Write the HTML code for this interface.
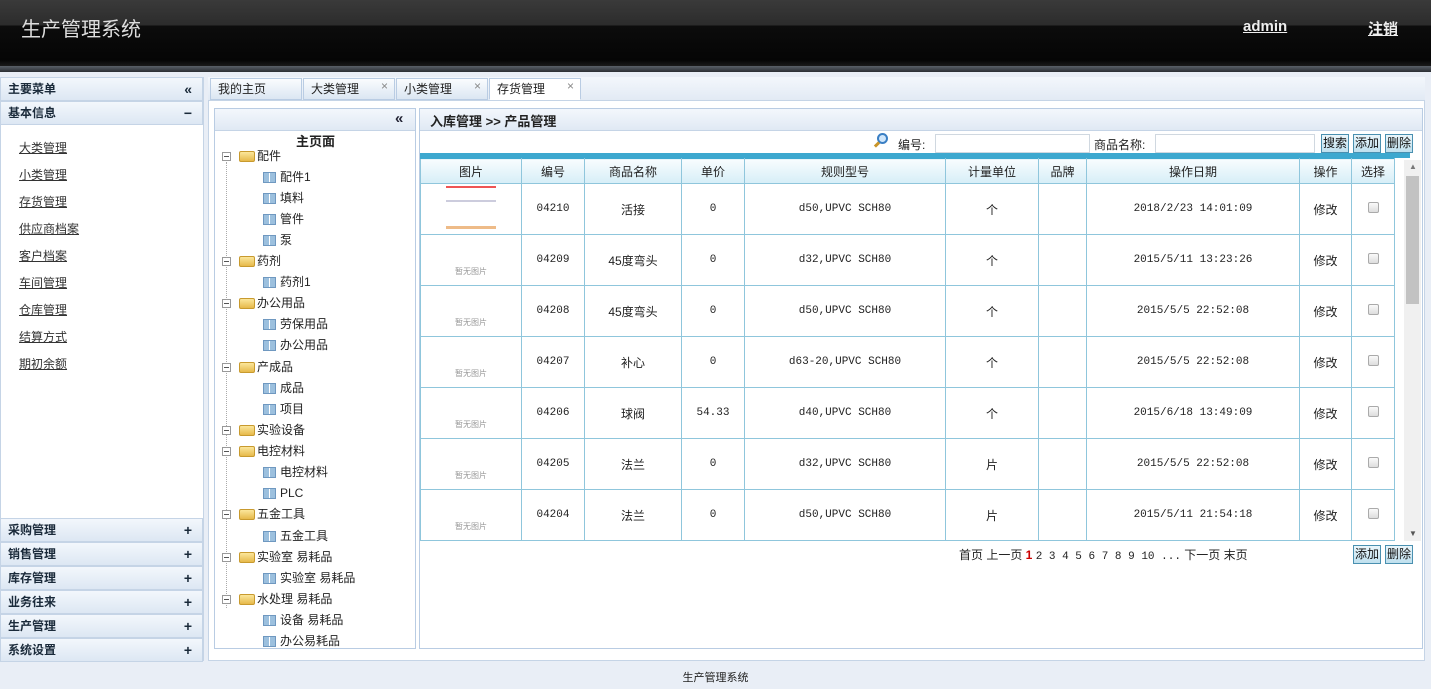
<!DOCTYPE html>
<html><head><meta charset="utf-8">
<style>
*{margin:0;padding:0;box-sizing:border-box}
body{width:1431px;height:689px;overflow:hidden;background:#e9eef6;font-family:"Liberation Sans","Noto Sans CJK SC",sans-serif;font-size:12px;color:#222;position:relative}
.a{position:absolute}
#hd{left:0;top:0;width:1431px;height:68px;background:linear-gradient(#3a3a3a 0,#2c2c2c 25px,#0c0c0c 26px,#050505 60px,#1a1a1a 66px)}
#hd2{left:0;top:66px;width:1431px;height:6px;background:linear-gradient(#5a6068,#2a2e33)}
.ttl{left:21px;top:13px;color:#ddd;font-size:20px}
.hl{color:#eee;font-size:15px;font-weight:bold;text-decoration:underline;top:18px}
.ph{background:linear-gradient(#f3f7fc,#dde7f3);border:1px solid #c5d4e6;font-weight:bold;color:#1a2a3a;padding-left:7px;line-height:22px;height:24px;width:203px;left:0}
.ph span{position:absolute;right:10px;top:0;font-size:14px}
.lk{left:19px;color:#333;text-decoration:underline;font-size:12px}
.tab{top:78px;height:22px;border:1px solid #b9cce3;background:linear-gradient(#fafcfe,#dbe6f2);line-height:20px;padding-left:7px;color:#222}
.tab i{position:absolute;right:6px;top:-3px;font-style:normal;color:#888;font-size:12px}
.tr{left:222px;height:21px;line-height:21px;font-size:12px}
.bx{display:inline-block;width:9px;height:9px;border:1px solid #999;vertical-align:middle;position:relative;margin-right:8px;background:#fff}
.bx:after{content:"";position:absolute;left:1px;top:3px;width:5px;height:1px;background:#555}
.fd{display:inline-block;width:16px;height:11px;background:linear-gradient(#fbe79b,#e6b94b);border:1px solid #c89a2e;border-radius:2px;vertical-align:middle;margin-right:2px}
.lf{display:inline-block;width:13px;height:11px;background:#9cc0de;border:1px solid #6f98c0;vertical-align:middle;margin:0 4px 0 41px;background-image:linear-gradient(90deg,transparent 5px,#fff 5px,#fff 6px,transparent 6px)}
table{border-collapse:collapse;position:absolute;left:420px;top:158px;table-layout:fixed}
td,th{border:1px solid #8fc6dc;text-align:center;font-weight:normal;font-size:12px}
th{height:25px;background:linear-gradient(#f8fcfe,#d6eef7);border-top:5px solid #3da8cf}
td{height:51px;background:#fff}
td.m{font-family:"Liberation Mono","Noto Sans CJK SC",monospace;font-size:11px}
.cb{display:inline-block;width:11px;height:11px;border:1px solid #aaa;border-radius:2px;background:linear-gradient(#fafafa,#ddd)}
.np{font-size:8px;color:#999;display:block;margin-top:22px}
.btn{top:134px;height:19px;border:1px solid #4a90b0;background:linear-gradient(#eaf6fb,#bfe0ee);font-size:12px;line-height:17px;padding:0 1px;color:#111}
.inp{top:134px;height:19px;border:1px solid #d0d8e0;background:#fff}
</style></head><body>
<div id="hd" class="a"></div><div id="hd2" class="a"></div>
<div class="a ttl">生产管理系统</div>
<div class="a hl" style="left:1243px">admin</div>
<div class="a hl" style="left:1368px">注销</div>

<div class="a" style="left:0;top:77px;width:204px;height:584px;background:#fff;border:1px solid #c5d4e6"></div>
<div class="a ph" style="top:77px">主要菜单<span>«</span></div>
<div class="a ph" style="top:101px">基本信息<span>−</span></div>
<div class="a lk" style="top:139px">大类管理</div>
<div class="a lk" style="top:166px">小类管理</div>
<div class="a lk" style="top:193px">存货管理</div>
<div class="a lk" style="top:220px">供应商档案</div>
<div class="a lk" style="top:247px">客户档案</div>
<div class="a lk" style="top:274px">车间管理</div>
<div class="a lk" style="top:301px">仓库管理</div>
<div class="a lk" style="top:328px">结算方式</div>
<div class="a lk" style="top:355px">期初余额</div>
<div class="a ph" style="top:518px">采购管理<span>+</span></div>
<div class="a ph" style="top:542px">销售管理<span>+</span></div>
<div class="a ph" style="top:566px">库存管理<span>+</span></div>
<div class="a ph" style="top:590px">业务往来<span>+</span></div>
<div class="a ph" style="top:614px">生产管理<span>+</span></div>
<div class="a ph" style="top:638px">系统设置<span>+</span></div>

<div class="a" style="left:208px;top:77px;width:1217px;height:584px;background:#fff;border:1px solid #c5d4e6"></div>
<div class="a" style="left:208px;top:77px;width:1217px;height:24px;background:linear-gradient(#f3f7fc,#e2eaf4);border-bottom:1px solid #c5d4e6"></div>
<div class="a tab" style="left:210px;width:92px">我的主页</div>
<div class="a tab" style="left:303px;width:92px">大类管理<i>×</i></div>
<div class="a tab" style="left:396px;width:92px">小类管理<i>×</i></div>
<div class="a tab" style="left:489px;width:92px;background:#fff;border-bottom-color:#fff">存货管理<i>×</i></div>

<div class="a" style="left:214px;top:108px;width:202px;height:541px;border:1px solid #b9cce3;background:#fff"></div>
<div class="a" style="left:215px;top:109px;width:200px;height:22px;background:linear-gradient(#f3f7fc,#e0e9f4);border-bottom:1px solid #c5d4e6"></div>
<div class="a" style="left:395px;top:110px;font-weight:bold;font-size:15px;color:#223">«</div>
<div class="a" style="left:296px;top:131px;font-weight:bold;font-size:13px">主页面</div>
<div class="a" style="left:226px;top:162px;width:1px;height:446px;border-left:1px dotted #aaa"></div>
<div class="a tr" style="top:146px"><span class="bx"></span><span class="fd"></span>配件</div>
<div class="a tr" style="top:167px"><span class="lf"></span>配件1</div>
<div class="a tr" style="top:188px"><span class="lf"></span>填料</div>
<div class="a tr" style="top:209px"><span class="lf"></span>管件</div>
<div class="a tr" style="top:230px"><span class="lf"></span>泵</div>
<div class="a tr" style="top:251px"><span class="bx"></span><span class="fd"></span>药剂</div>
<div class="a tr" style="top:272px"><span class="lf"></span>药剂1</div>
<div class="a tr" style="top:293px"><span class="bx"></span><span class="fd"></span>办公用品</div>
<div class="a tr" style="top:314px"><span class="lf"></span>劳保用品</div>
<div class="a tr" style="top:335px"><span class="lf"></span>办公用品</div>
<div class="a tr" style="top:357px"><span class="bx"></span><span class="fd"></span>产成品</div>
<div class="a tr" style="top:378px"><span class="lf"></span>成品</div>
<div class="a tr" style="top:399px"><span class="lf"></span>项目</div>
<div class="a tr" style="top:420px"><span class="bx"></span><span class="fd"></span>实验设备</div>
<div class="a tr" style="top:441px"><span class="bx"></span><span class="fd"></span>电控材料</div>
<div class="a tr" style="top:462px"><span class="lf"></span>电控材料</div>
<div class="a tr" style="top:483px"><span class="lf"></span>PLC</div>
<div class="a tr" style="top:504px"><span class="bx"></span><span class="fd"></span>五金工具</div>
<div class="a tr" style="top:526px"><span class="lf"></span>五金工具</div>
<div class="a tr" style="top:547px"><span class="bx"></span><span class="fd"></span>实验室 易耗品</div>
<div class="a tr" style="top:568px"><span class="lf"></span>实验室 易耗品</div>
<div class="a tr" style="top:589px"><span class="bx"></span><span class="fd"></span>水处理 易耗品</div>
<div class="a tr" style="top:610px"><span class="lf"></span>设备 易耗品</div>
<div class="a" style="left:215px;top:631px;width:200px;height:17px;overflow:hidden"><div class="tr" style="position:absolute;left:7px;top:0"><span class="lf"></span>办公易耗品</div></div>

<div class="a" style="left:419px;top:108px;width:1004px;height:541px;border:1px solid #b9cce3;background:#fff"></div>
<div class="a" style="left:420px;top:109px;width:1002px;height:22px;background:linear-gradient(#f3f7fc,#e0e9f4);border-bottom:1px solid #c5d4e6"></div>
<div class="a" style="left:430px;top:111px;font-weight:bold;font-size:13px">入库管理 &gt;&gt; 产品管理</div>
<div class="a" style="left:877px;top:133px;width:11px;height:11px;border:2px solid #3a7fc4;border-radius:50%;background:#cfe6fb"></div>
<div class="a" style="left:874px;top:143px;width:6px;height:3px;background:#c9952a;transform:rotate(-45deg)"></div>
<div class="a" style="left:898px;top:136px">编号:</div>
<div class="a inp" style="left:935px;width:155px"></div>
<div class="a" style="left:1094px;top:136px">商品名称:</div>
<div class="a inp" style="left:1155px;width:160px"></div>
<div class="a btn" style="left:1321px">搜索</div>
<div class="a btn" style="left:1353px">添加</div>
<div class="a btn" style="left:1385px">删除</div>
<div class="a" style="left:420px;top:153px;width:990px;height:5px;background:#3da8cf"></div>

<table>
<colgroup><col style="width:101px"><col style="width:63px"><col style="width:97px"><col style="width:63px"><col style="width:201px"><col style="width:93px"><col style="width:48px"><col style="width:213px"><col style="width:52px"><col style="width:43px"></colgroup>
<tr><th style="height:25px;border-top-width:1px">图片</th><th style="border-top-width:1px">编号</th><th style="border-top-width:1px">商品名称</th><th style="border-top-width:1px">单价</th><th style="border-top-width:1px">规则型号</th><th style="border-top-width:1px">计量单位</th><th style="border-top-width:1px">品牌</th><th style="border-top-width:1px">操作日期</th><th style="border-top-width:1px">操作</th><th style="border-top-width:1px">选择</th></tr>
<tr><td><div style="width:50px;height:46px;margin:auto;background:linear-gradient(#e55 0,#e55 2px,#fff 2px,#fff 14px,#ccd 14px,#ccd 16px,#fff 16px,#fff 40px,#eb8 40px,#eb8 43px,#fff 43px)"></div></td><td class="m">04210</td><td>活接</td><td class="m">0</td><td class="m">d50,UPVC SCH80</td><td>个</td><td></td><td class="m">2018/2/23 14:01:09</td><td>修改</td><td><span class="cb"></span></td></tr>
<tr><td><span class="np">暂无图片</span></td><td class="m">04209</td><td>45度弯头</td><td class="m">0</td><td class="m">d32,UPVC SCH80</td><td>个</td><td></td><td class="m">2015/5/11 13:23:26</td><td>修改</td><td><span class="cb"></span></td></tr>
<tr><td><span class="np">暂无图片</span></td><td class="m">04208</td><td>45度弯头</td><td class="m">0</td><td class="m">d50,UPVC SCH80</td><td>个</td><td></td><td class="m">2015/5/5 22:52:08</td><td>修改</td><td><span class="cb"></span></td></tr>
<tr><td><span class="np">暂无图片</span></td><td class="m">04207</td><td>补心</td><td class="m">0</td><td class="m">d63-20,UPVC SCH80</td><td>个</td><td></td><td class="m">2015/5/5 22:52:08</td><td>修改</td><td><span class="cb"></span></td></tr>
<tr><td><span class="np">暂无图片</span></td><td class="m">04206</td><td>球阀</td><td class="m">54.33</td><td class="m">d40,UPVC SCH80</td><td>个</td><td></td><td class="m">2015/6/18 13:49:09</td><td>修改</td><td><span class="cb"></span></td></tr>
<tr><td><span class="np">暂无图片</span></td><td class="m">04205</td><td>法兰</td><td class="m">0</td><td class="m">d32,UPVC SCH80</td><td>片</td><td></td><td class="m">2015/5/5 22:52:08</td><td>修改</td><td><span class="cb"></span></td></tr>
<tr><td><span class="np">暂无图片</span></td><td class="m">04204</td><td>法兰</td><td class="m">0</td><td class="m">d50,UPVC SCH80</td><td>片</td><td></td><td class="m">2015/5/11 21:54:18</td><td>修改</td><td><span class="cb"></span></td></tr>
</table>
<div class="a" style="left:420px;top:541px;width:990px;height:5px;background:#fff"></div>
<div class="a" style="left:1404px;top:160px;width:17px;height:381px;background:#f0f0f0"></div>
<div class="a" style="left:1406px;top:176px;width:13px;height:128px;background:#c2c2c2"></div>
<div class="a" style="left:1409px;top:162px;font-size:8px;color:#777">▲</div>
<div class="a" style="left:1409px;top:529px;font-size:8px;color:#555">▼</div>

<div class="a" style="left:959px;top:546px;font-size:12px">首页 上一页 <b style="color:#c00">1</b> <span style="font-family:'Liberation Mono',monospace;font-size:11px">2 3 4 5 6 7 8 9 10 ...</span> 下一页 末页</div>
<div class="a btn" style="left:1353px;top:545px">添加</div>
<div class="a btn" style="left:1385px;top:545px">删除</div>

<div class="a" style="left:0;top:669px;width:1431px;text-align:center;font-size:11px">生产管理系统</div>
</body></html>
